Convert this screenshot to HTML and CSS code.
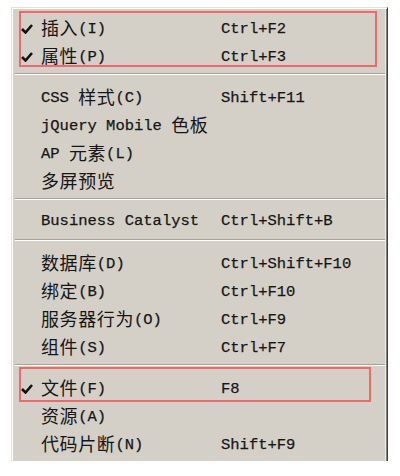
FILE: index.html
```html
<!DOCTYPE html>
<html lang="zh-CN">
<head>
    <meta charset="UTF-8">
    <meta name="viewport" content="width=device-width, initial-scale=1.0">
    <title>窗口菜单</title>
    <link rel="stylesheet" href="styles.css">
</head>
<body>
    <div class="menu">
        <div class="group mark-top">
            <div class="item">
                <span class="check"><svg width="12" height="10" viewBox="0 0 12 10"><path d="M1 5 L4.5 8.5 L11 1" fill="none" stroke="#111" stroke-width="2.6"/></svg></span>
                <span class="label"><span class="zh">插入</span>(I)</span>
                <span class="key">Ctrl+F2</span>
            </div>
            <div class="item">
                <span class="check"><svg width="12" height="10" viewBox="0 0 12 10"><path d="M1 5 L4.5 8.5 L11 1" fill="none" stroke="#111" stroke-width="2.6"/></svg></span>
                <span class="label"><span class="zh">属性</span>(P)</span>
                <span class="key">Ctrl+F3</span>
            </div>
        </div>

        <div class="sep"></div>

        <div class="item">
            <span class="check"></span>
            <span class="label">CSS <span class="zh">样式</span>(C)</span>
            <span class="key">Shift+F11</span>
        </div>
        <div class="item">
            <span class="check"></span>
            <span class="label">jQuery Mobile <span class="zh">色板</span></span>
            <span class="key"></span>
        </div>
        <div class="item">
            <span class="check"></span>
            <span class="label">AP <span class="zh">元素</span>(L)</span>
            <span class="key"></span>
        </div>
        <div class="item">
            <span class="check"></span>
            <span class="label"><span class="zh">多屏预览</span></span>
            <span class="key"></span>
        </div>

        <div class="sep"></div>

        <div class="item">
            <span class="check"></span>
            <span class="label">Business Catalyst</span>
            <span class="key">Ctrl+Shift+B</span>
        </div>

        <div class="sep"></div>

        <div class="item">
            <span class="check"></span>
            <span class="label"><span class="zh">数据库</span>(D)</span>
            <span class="key">Ctrl+Shift+F10</span>
        </div>
        <div class="item">
            <span class="check"></span>
            <span class="label"><span class="zh">绑定</span>(B)</span>
            <span class="key">Ctrl+F10</span>
        </div>
        <div class="item">
            <span class="check"></span>
            <span class="label"><span class="zh">服务器行为</span>(O)</span>
            <span class="key">Ctrl+F9</span>
        </div>
        <div class="item">
            <span class="check"></span>
            <span class="label"><span class="zh">组件</span>(S)</span>
            <span class="key">Ctrl+F7</span>
        </div>

        <div class="sep"></div>

        <div class="group mark-file">
            <div class="item">
                <span class="check"><svg width="12" height="10" viewBox="0 0 12 10"><path d="M1 5 L4.5 8.5 L11 1" fill="none" stroke="#111" stroke-width="2.6"/></svg></span>
                <span class="label"><span class="zh">文件</span>(F)</span>
                <span class="key">F8</span>
            </div>
        </div>
        <div class="item">
            <span class="check"></span>
            <span class="label"><span class="zh">资源</span>(A)</span>
            <span class="key"></span>
        </div>
        <div class="item">
            <span class="check"></span>
            <span class="label"><span class="zh">代码片断</span>(N)</span>
            <span class="key">Shift+F9</span>
        </div>
    </div>
</body>
</html>
```

FILE: styles.css
```css
body {
    margin: 0;
    padding: 0;
    background: #fff;
    font-family: "Liberation Mono", "Noto Sans CJK SC", monospace;
    font-size: 15.5px;
    color: #161616;
}

.menu {
    box-sizing: border-box;
    width: 377px;
    height: 454px;
    margin: 7px 0 0 11px;
    padding-top: 5px;
    overflow: hidden;
    background: #d4d0c8;
    border-top: 1px solid #e4e1da;
    border-left: 1px solid #e4e1da;
    border-right: 1px solid #404040;
    box-shadow: inset 1px 1px #fff, inset -1px 0 #808080, inset -2px 0 #ebe9e4;
}

.group {
    position: relative;
}

/* red annotation boxes drawn over the rows */
.group::after {
    content: "";
    position: absolute;
    left: 7px;
    border: 2px solid #ee6a6a;
    pointer-events: none;
}

.mark-top::after {
    top: -2px;
    bottom: 2px;
    right: 10px;
}

.mark-file::after {
    top: -6px;
    bottom: -1px;
    right: 16px;
}

.item {
    box-sizing: border-box;
    display: flex;
    align-items: baseline;
    height: 28px;
    line-height: 24px;
    padding: 2px 0;
    white-space: nowrap;
    -webkit-text-stroke: 0.25px #161616;
}

.check {
    align-self: center;
    width: 20px;
    padding-left: 9px;
    display: flex;
    align-items: center;
    padding-top: 4px;
}

.label {
    width: 180px;
}

.zh {
    font-family: "Noto Sans CJK SC", sans-serif;
    font-size: 18px;
    letter-spacing: 0.6px;
    vertical-align: -2px;
    -webkit-text-stroke: 0;
}

.sep {
    height: 1px;
    margin: 4px 2px 7px 3px;
    background: #a6a29a;
    border-bottom: 1px solid #fff;
}
```
